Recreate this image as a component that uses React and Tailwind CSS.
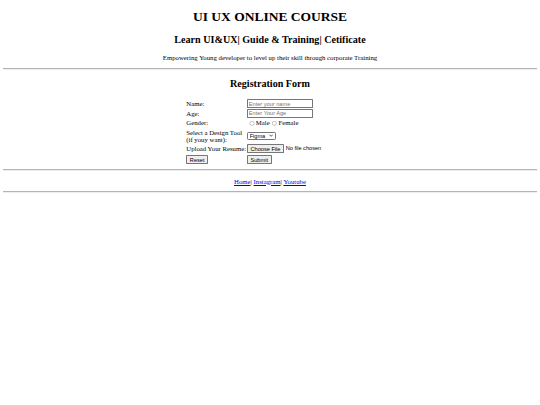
import React from "react";

const ctl = "font-['Liberation_Sans',Arial,sans-serif] text-[13.333px] leading-[normal]";
const btn = `${ctl} bg-[#efefef] border border-[#767676] rounded-[2px] px-1.5 py-px text-black`;
const hr = "border-t border-t-[#b4b4b4] border-b border-b-[#eeeeee]";
const txt = `${ctl} w-[157px] h-[21px] border border-[#767676] rounded-[2px] px-0.5 placeholder:text-[#757575]`;

export default function App() {
  return (
    <div className="[zoom:0.421875] w-[1280px] h-[960px] bg-white text-black font-['Liberation_Serif','Times_New_Roman',serif] text-[16px] leading-[normal] px-2 overflow-hidden">
      <h1 className="text-[32px] leading-[normal] font-bold text-center mt-[21.44px]">UI UX ONLINE COURSE</h1>
      <h2 className="text-[24px] leading-[normal] font-bold text-center mt-[21.44px]">Learn UI&amp;UX| Guide &amp; Training| Cetificate</h2>
      <p className="text-center mt-[21px]">Empowering Young developer to level up their skill through corporate Training</p>
      <hr className={`mt-[17px] ${hr}`} />

      <h2 className="text-[24px] leading-[normal] font-bold text-center mt-[18px]">Registration Form</h2>
      <form className="mt-[24px]">
        <table className="mx-auto border-separate border-spacing-0.5">
          <tbody>
            <tr className="h-[22px]">
              <td className="p-px">Name:</td>
              <td className="p-px">
                <input type="text" placeholder="Enter your name" className={txt} />
              </td>
            </tr>
            <tr className="h-[23px]">
              <td className="p-px">Age:</td>
              <td className="p-px">
                <input type="text" placeholder="Enter Your Age" className={txt} />
              </td>
            </tr>
            <tr className="h-[21px]">
              <td className="p-px">Gender:</td>
              <td className="p-px">
                <input type="radio" name="g" className="mt-[3px] mr-[3px] ml-[5px] align-[-2px]" />
                <span>Male</span>
                <input type="radio" name="g" className="mt-[3px] mr-[3px] ml-[5px] align-[-2px]" />
                <span>Female</span>
              </td>
            </tr>
            <tr className="h-[40px]">
              <td className="p-px">
                Select a Design Tool
                <br />
                (if youy want):
              </td>
              <td className="p-px">
                <span className="relative inline-block align-middle">
                  <select
                    className={`${ctl} appearance-none w-[68px] h-[19px] border border-[#767676] rounded-[3px] bg-white pl-1 pr-4`}
                    defaultValue="Figma"
                  >
                    <option>Figma</option>
                    <option>Adobe XD</option>
                    <option>Sketch</option>
                  </select>
                  <svg
                    className="absolute right-[6px] top-[6px] pointer-events-none"
                    width="10"
                    height="7"
                    viewBox="0 0 10 7"
                    fill="none"
                  >
                    <path d="M1 1.5 L5 5.5 L9 1.5" stroke="#000" strokeWidth="1.6" />
                  </svg>
                </span>
              </td>
            </tr>
            <tr className="h-[21px]">
              <td className="p-px">Upload Your Resume:</td>
              <td className="p-px">
                <input
                  type="file"
                  className={`${ctl} w-[253px] file:bg-[#efefef] file:border file:border-[#767676] file:rounded-[2px] file:px-1.5 file:py-px file:mr-1 file:text-black`}
                />
              </td>
            </tr>
            <tr className="h-[28px]">
              <td className="p-px">
                <button type="reset" className={btn}>Reset</button>
              </td>
              <td className="p-px">
                <button type="submit" className={btn}>Submit</button>
              </td>
            </tr>
          </tbody>
        </table>
      </form>
      <hr className={`mt-2 ${hr}`} />

      <p className="text-center mt-4">
        <a href="#" className="text-[#0000ee] underline">Home</a>|{" "}
        <a href="#" className="text-[#0000ee] underline">Instagram</a>|{" "}
        <a href="#" className="text-[#0000ee] underline">Youtube</a>
      </p>
      <hr className={`mt-4 ${hr}`} />
    </div>
  );
}
